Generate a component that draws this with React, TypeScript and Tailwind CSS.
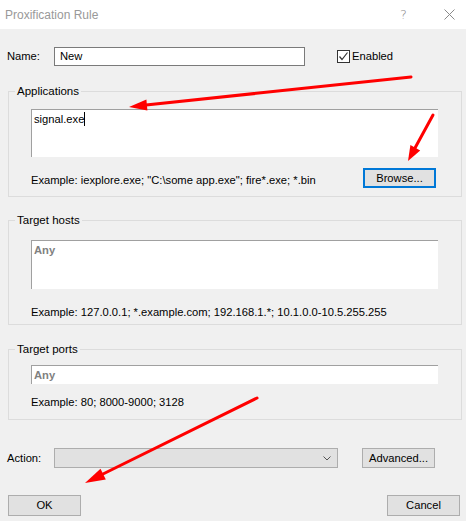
import React from "react";

function GroupLabel({ children }: { children: React.ReactNode }) {
  return (
    <span className="block w-fit -mt-[7px] ml-[6px] px-[2px] bg-[#f0f0f0] leading-[13px] text-[11.5px]">
      {children}
    </span>
  );
}

export default function App() {
  return (
    <div className="relative w-[466px] h-[521px] overflow-hidden bg-[#f0f0f0] text-black text-[11.2px] font-['Liberation_Sans',Arial,sans-serif]">
      {/* Title bar */}
      <div className="h-[29px] bg-white flex items-center pl-[5px]">
        <span className="text-[12px] text-[#999999]">Proxification Rule</span>
        <span className="ml-auto text-[13px] text-[#8a8a8a] leading-none mr-[37px] font-['DejaVu_Sans',sans-serif] font-light">?</span>
        <svg width="11" height="11" viewBox="0 0 11 11" className="mr-[11px]">
          <path d="M0.5 0.5 L10.5 10.5 M10.5 0.5 L0.5 10.5" stroke="#8a8a8a" strokeWidth="1" />
        </svg>
      </div>

      <div className="pl-[8px] pr-[4px]">
        {/* Name row */}
        <div className="mt-[18px] h-[19px] flex items-center">
          <span className="w-[47px] -ml-[1px] pr-[1px]">Name:</span>
          <div className="w-[251px] h-[19px] border border-[#7a7a7a] bg-white pl-[5px] flex items-center">
            New
          </div>
          <div className="ml-[32px] w-[13px] h-[13px] border border-[#333333] bg-white flex items-center justify-center">
            <svg width="11" height="11" viewBox="0 0 11 11">
              <path d="M1.5 5.5 L4 8.5 L9.5 1.5" stroke="#333333" strokeWidth="1.2" fill="none" />
            </svg>
          </div>
          <span className="ml-[2px]">Enabled</span>
        </div>

        {/* Applications */}
        <div className="mt-[25px] border border-[#dcdcdc] h-[106px]">
          <GroupLabel>Applications</GroupLabel>
          <div className="ml-[22px] mt-[11px] w-[407px] h-[48px] bg-white border-t border-l border-[#a0a0a0] pl-[2px] pt-[2px] flex items-start">
            <span className="leading-[14px]">signal.exe</span>
            <span className="w-[1px] h-[14px] bg-black" />
          </div>
          <div className="ml-[22px] mt-[11px] w-[405px] flex items-center justify-between">
            <span className="mt-[4px]">Example: iexplore.exe; "C:\some app.exe"; fire*.exe; *.bin</span>
            <div className="w-[73px] h-[20px] border-2 border-[#0078d7] bg-[#e1e1e1] flex items-center justify-center">
              Browse...
            </div>
          </div>
        </div>

        {/* Target hosts */}
        <div className="mt-[23px] border border-[#dcdcdc] h-[105px]">
          <GroupLabel>Target hosts</GroupLabel>
          <div className="ml-[22px] mt-[13px] w-[407px] h-[49px] bg-white border-t border-l border-[#a0a0a0] pl-[2px] pt-[1px]">
            <span className="font-bold text-[#808080] leading-[14px]">Any</span>
          </div>
          <div className="ml-[22px] mt-[16px] leading-[14px]">
            Example: 127.0.0.1; *.example.com; 192.168.1.*; 10.1.0.0-10.5.255.255
          </div>
        </div>

        {/* Target ports */}
        <div className="mt-[24px] border border-[#dcdcdc] h-[71px]">
          <GroupLabel>Target ports</GroupLabel>
          <div className="ml-[22px] mt-[9px] w-[407px] h-[19px] bg-white border-t border-l border-[#a0a0a0] pl-[2px] flex items-center">
            <span className="font-bold text-[#808080]">Any</span>
          </div>
          <div className="ml-[22px] mt-[11px] leading-[14px]">Example: 80; 8000-9000; 3128</div>
        </div>

        {/* Action row */}
        <div className="mt-[28px] h-[20px] flex items-center">
          <span className="w-[47px] -ml-[1px] pr-[1px]">Action:</span>
          <div className="w-[284px] h-[20px] border border-[#adadad] bg-[#e1e1e1] flex items-center justify-end pr-[6px]">
            <svg width="8" height="5" viewBox="0 0 8 5">
              <path d="M0.5 0.5 L4 4 L7.5 0.5" stroke="#555555" strokeWidth="1" fill="none" />
            </svg>
          </div>
          <div className="ml-[24px] w-[73px] h-[20px] border border-[#adadad] bg-[#e1e1e1] flex items-center justify-center">
            Advanced...
          </div>
        </div>

        {/* OK / Cancel */}
        <div className="mt-[27px] flex justify-between pr-[2px]">
          <div className="w-[73px] h-[21px] border border-[#adadad] bg-[#e1e1e1] flex items-center justify-center">
            OK
          </div>
          <div className="w-[73px] h-[21px] border border-[#adadad] bg-[#e1e1e1] flex items-center justify-center">
            Cancel
          </div>
        </div>
      </div>

      {/* Red annotation arrows */}
      <svg className="absolute inset-0 pointer-events-none" width="466" height="521" viewBox="0 0 466 521">
        <g fill="#ff0000" stroke="#ff0000" strokeLinecap="round">
          <line x1="411" y1="77" x2="146" y2="105" strokeWidth="3" />
          <polygon points="129,107 147.4,110.6 146.4,99.6" stroke="none" />
          <line x1="433" y1="115" x2="415" y2="148" strokeWidth="3" />
          <polygon points="408,161 420.2,150.5 410.4,145" stroke="none" />
          <line x1="257" y1="398" x2="103" y2="474" strokeWidth="3" />
          <polygon points="85,483 105.8,479.5 100.5,468.8" stroke="none" />
        </g>
      </svg>
    </div>
  );
}
